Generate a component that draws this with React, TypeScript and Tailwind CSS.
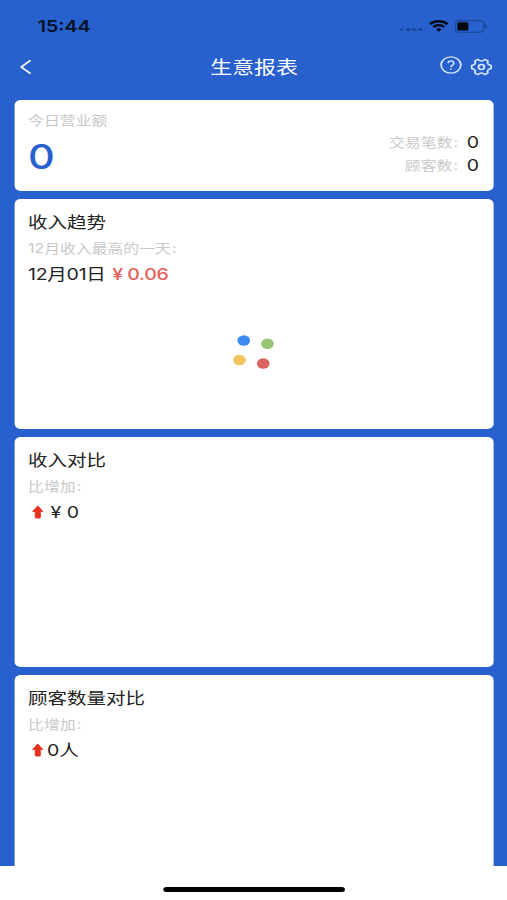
import React from "react";

interface ReportCardProps {
  title: string;
  label: string;
  className?: string;
  children: React.ReactNode;
}

const ReportCard: React.FC<ReportCardProps> = ({ title, label, className = "h-[230px] rounded-[5px]", children }) => {
  return (
    <section className={`shrink-0 bg-white px-[11.5px] pt-[10px] ${className}`}>
      <h2 className="text-[16px] leading-[26px] text-[#222]">{title}</h2>
      <p className="text-[13px] leading-[26px] text-[#c8c8c8]">
        {label}
        <span className="ml-[1px]">:</span>
      </p>
      {children}
    </section>
  );
};

const UpArrow = () => (
  <svg className="ml-[2.5px] h-[14px] w-[10px]" viewBox="0 0 10 14">
    <path
      d="M5 .9 9.2 6.5H7.1V12.3Q7.1 13 6.4 13H3.6Q2.9 13 2.9 12.3V6.5H.8Z"
      fill="#e8301f"
      stroke="#e8301f"
      strokeWidth=".8"
      strokeLinejoin="round"
    />
  </svg>
);

const StatusBar = () => (
  <div className="flex h-[44px] shrink-0 items-center pt-[8px] pl-[31px]">
    <span className="text-[16px] leading-[20px] font-semibold text-[#061225]">15:44</span>
    <div className="mr-[16.5px] ml-auto flex items-center">
      {/* No signal */}
      <div className="mt-[7px] mr-[4.5px] flex gap-[1.6px]">
        <i className="size-[3.6px] rounded-full bg-[#1d4a9f]" />
        <i className="size-[3.6px] rounded-full bg-[#1d4a9f]" />
        <i className="size-[3.6px] rounded-full bg-[#1d4a9f]" />
        <i className="size-[3.6px] rounded-full bg-[#1d4a9f]" />
      </div>
      <svg className="h-[12px] w-[16px]" viewBox="0 0 16 12">
        <path d="M.9 4.1a10.4 10.4 0 0 1 14.2 0" fill="none" stroke="#04070f" strokeWidth="2.4" />
        <path d="M3.5 6.9a6.5 6.5 0 0 1 9 0" fill="none" stroke="#04070f" strokeWidth="2.1" />
        <path d="M5.8 9.2a3.3 3.3 0 0 1 4.4 0L8 11.7Z" fill="#04070f" />
      </svg>
      {/* Battery */}
      <svg className="ml-[5px] h-[13px] w-[27px]" viewBox="0 0 27 13">
        <rect x=".6" y=".6" width="23.4" height="11.6" rx="3.2" fill="none" stroke="#1b4797" strokeWidth="1.1" />
        <rect x="2.3" y="2.2" width="9" height="8.4" rx="1.4" fill="#03060d" />
        <path d="M25 4.3q1.7.6 1.7 2.1T25 8.5Z" fill="#1b4797" />
      </svg>
    </div>
  </div>
);

const NavBar = () => (
  <nav className="flex h-[46px] shrink-0 items-center justify-between pr-[12px] pl-[16px] text-white">
    <svg className="h-[16px] w-[42px]" viewBox="0 0 42 16" fill="none" stroke="currentColor" strokeWidth="1.6">
      <path d="M9 1.3 1.5 8 9 14.7" />
    </svg>
    <h1 className="mt-[2px] mr-[2px] text-[18px] leading-[26px]">生意报表</h1>
    <div className="flex items-center gap-[7px] text-[#d9e9ff]">
      <svg className="-mt-[4px] h-[18px] w-[18px]" viewBox="0 0 18 18" fill="none" stroke="currentColor" strokeWidth="1.4">
        <circle cx="9" cy="9" r="8.1" />
        <path d="M6.7 7.1a2.3 2.3 0 1 1 3.6 2Q9 9.9 9 11.1" />
        <circle cx="9" cy="13.1" r=".8" fill="currentColor" stroke="none" />
      </svg>
      <svg className="h-[18px] w-[18px]" viewBox="0 0 18 18" fill="none" stroke="currentColor" strokeWidth="1.5" strokeLinejoin="round">
        <path d="M6.3 1.4Q9 4.5 11.7 1.4L14.3 2.9Q13.1 6.7 17 7.5V10.5Q13.1 11.3 14.3 15.1L11.7 16.6Q9 13.5 6.3 16.6L3.7 15.1Q4.9 11.3 1 10.5V7.5Q4.9 6.7 3.7 2.9Z" />
        <circle cx="9" cy="9" r="2.4" />
      </svg>
    </div>
  </nav>
);

export default function App() {
  return (
    <div className="h-[900px] w-[507px] overflow-hidden bg-white">
      <div className="flex h-[900px] w-[416px] origin-top-left scale-x-[1.21875] flex-col font-['Inter','Noto_Sans_CJK_SC',sans-serif]">
        <div className="flex h-[865.5px] shrink-0 flex-col overflow-hidden bg-[#2860ce]">
          <StatusBar />
          <NavBar />
          <main className="flex flex-col gap-[8px] px-[11.5px] pt-[10px]">
            <section className="flex h-[91.4px] shrink-0 justify-between rounded-[5px] bg-white px-[11.5px]">
              <div className="pt-[7px]">
                <p className="text-[13px] leading-[26px] text-[#c8c8c8]">今日营业额</p>
                <p className="text-[34px] leading-[48px] font-medium text-[#2860ce]">0</p>
              </div>
              <div className="pt-[31px] text-right text-[13px] text-[#c8c8c8]">
                <p className="flex h-[23px] items-center justify-end">
                  交易笔数<span className="ml-[1px]">:</span>
                  <span className="-mt-[2px] ml-[7px] text-[16px] text-[#222]">0</span>
                </p>
                <p className="flex h-[23px] items-center justify-end">
                  顾客数<span className="ml-[1px]">:</span>
                  <span className="-mt-[2px] ml-[7px] text-[16px] text-[#222]">0</span>
                </p>
              </div>
            </section>

            <ReportCard title="收入趋势" label="12月收入最高的一天">
              <p className="flex text-[16px] leading-[26px] tracking-[-0.2px] text-[#222]">
                12月01日
                <span className="ml-[5.5px] font-medium text-[#e4605b]">
                  ¥<span className="ml-[3.5px]">0.06</span>
                </span>
              </p>
              {/* Loading dots */}
              <svg className="mt-[46px] ml-[168px] h-[36px] w-[34px]" viewBox="0 0 34 36">
                <circle cx="9" cy="7.5" r="5.2" fill="#3d8bf0" />
                <circle cx="28.5" cy="10.8" r="5.2" fill="#98c474" />
                <circle cx="5.5" cy="27" r="5.2" fill="#f0c55f" />
                <circle cx="25" cy="30.5" r="5.2" fill="#d96460" />
              </svg>
            </ReportCard>

            <ReportCard title="收入对比" label="比增加">
              <p className="flex items-center text-[16px] leading-[26px] text-[#222]">
                <UpArrow />
                <span className="ml-[6px]">¥ 0</span>
              </p>
            </ReportCard>

            <ReportCard title="顾客数量对比" label="比增加" className="h-[200px] rounded-t-[5px]">
              <p className="flex items-center text-[16px] leading-[26px] text-[#222]">
                <UpArrow />
                <span className="ml-[3px]">0人</span>
              </p>
            </ReportCard>
          </main>
        </div>
        {/* Home indicator */}
        <div className="mt-[21px] ml-[134px] h-[5.5px] w-[148.5px] shrink-0 rounded-full bg-black" />
      </div>
    </div>
  );
}
